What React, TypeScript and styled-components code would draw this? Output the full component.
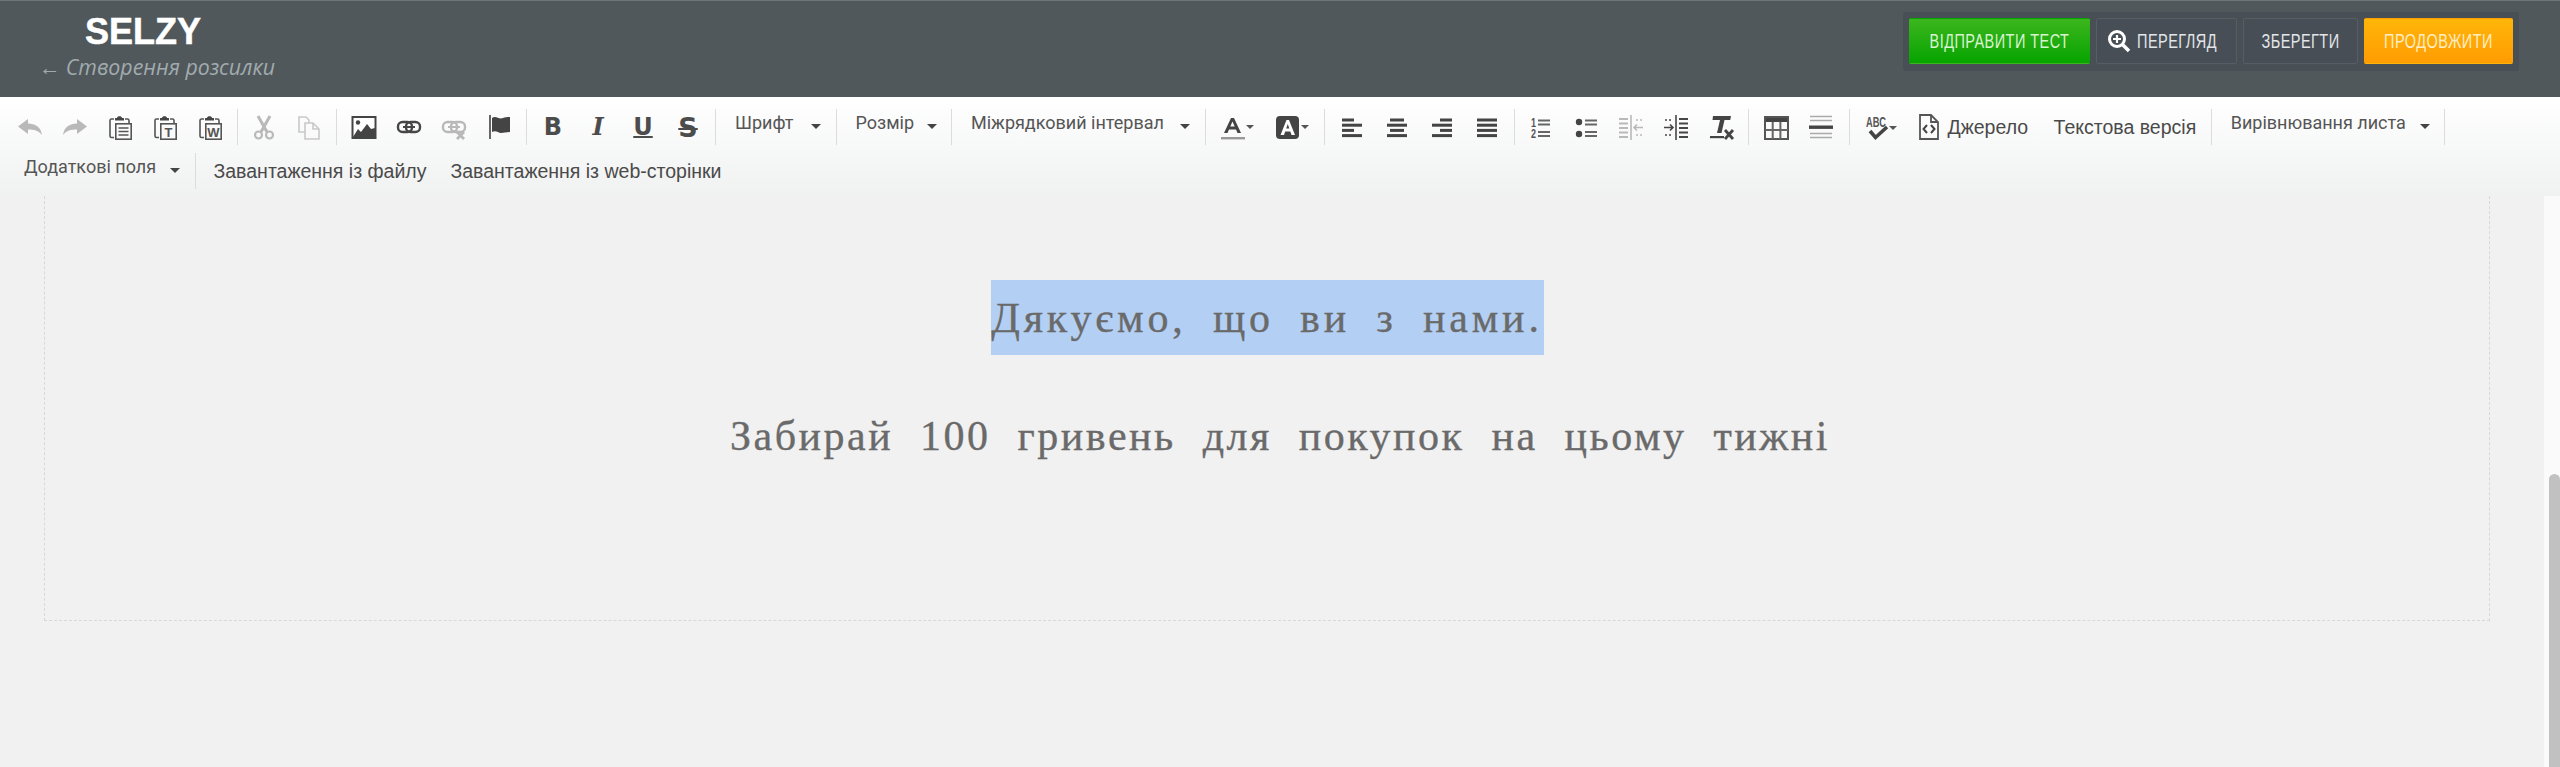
import React from 'react';
import styled, { createGlobalStyle } from 'styled-components';

const GlobalStyle = createGlobalStyle`
  html, body {
    margin: 0;
    padding: 0;
    height: 100%;
    background: #f1f1f1;
    overflow: hidden;
  }
`;

const Page = styled.div`
  width: 2560px;
  height: 767px;
  display: flex;
  flex-direction: column;
  overflow: hidden;
  font-family: 'Liberation Sans', Arial, sans-serif;
`;

const Header = styled.header`
  height: 97px;
  box-sizing: border-box;
  flex: none;
  display: flex;
  justify-content: space-between;
  align-items: flex-start;
  background: #50585c;
  border-top: 1px solid #6f7679;
  padding: 11px 41px 0 39px;
`;

const Brand = styled.div`
  display: flex;
  flex-direction: column;
`;

const Logo = styled.div`
  margin: 1px 0 0 46px;
  font-size: 36px;
  line-height: 38px;
  font-weight: 700;
  letter-spacing: 0;
  color: #fff;
  -webkit-text-stroke: 0.5px #fff;
`;

const Subtitle = styled.div`
  margin-top: 1px;
  font-family: 'Open Sans', sans-serif;
  font-style: italic;
  font-size: 21.3px;
  line-height: 30px;
  color: #a2abae;
`;

const ButtonGroup = styled.div`
  display: flex;
  gap: 6px;
  padding: 6px;
  height: 59px;
  box-sizing: border-box;
  background: #495055;
  border-radius: 3px;
`;

const tones = {
  green: { bg: 'linear-gradient(#3cb61e, #06a400)', fg: '#d9f2cf', line: 'transparent' },
  dark: { bg: '#474e56', fg: '#e3e6e8', line: '#565d64' },
  orange: { bg: 'linear-gradient(#ffb508, #ff9c03)', fg: '#ffedc4', line: 'transparent' },
};

const ActionButton = styled.div<{ $tone: keyof typeof tones; $width: number; $inset?: number }>`
  width: ${(p) => p.$width}px;
  height: 46px;
  box-sizing: border-box;
  display: flex;
  align-items: center;
  justify-content: center;
  gap: 6px;
  padding-right: ${(p) => p.$inset ?? 0}px;
  border-radius: 2px;
  border: 1px solid ${(p) => tones[p.$tone].line};
  background: ${(p) => tones[p.$tone].bg};
  color: ${(p) => tones[p.$tone].fg};
`;

// no narrow face is installed, so the caption is drawn small and pulled up
const ActionLabel = styled.span`
  display: inline-block;
  font-size: 14.5px;
  letter-spacing: 0.45px;
  white-space: nowrap;
  transform: scaleY(1.4);
`;

const Toolbar = styled.div`
  height: 99px;
  box-sizing: border-box;
  flex: none;
  background: linear-gradient(#ffffff, #f0f1f1);
  padding: 8px 0 0 7px;
  display: flex;
  flex-direction: column;
`;

const ToolRow = styled.div`
  height: 44px;
  display: flex;
  align-items: center;
  color: #444;
`;

const IconButton = styled.div<{ $off?: boolean; $w?: number }>`
  width: ${(p) => p.$w ?? 45}px;
  height: 44px;
  flex: none;
  display: flex;
  align-items: center;
  justify-content: center;
  color: ${(p) => (p.$off ? '#b9b9b9' : '#464646')};
`;

const Sep = styled.span`
  flex: none;
  width: 1px;
  height: 36px;
  margin: 0 4px 0 4.5px;
  background: #dcdcdc;
`;

const Dropdown = styled.div<{ $first?: boolean; $w: number }>`
  flex: none;
  width: ${(p) => p.$w}px;
  box-sizing: border-box;
  display: flex;
  align-items: center;
  justify-content: space-between;
  margin: -9px 0 0;
  padding: 0 10px 0 ${(p) => (p.$first ? 17 : 15)}px;
  font-family: Roboto, sans-serif;
  font-size: 18px;
  color: #555;
  white-space: nowrap;
`;

const Caret = styled.span`
  width: 0;
  height: 0;
  margin-top: 8px;
  border-left: 5px solid transparent;
  border-right: 5px solid transparent;
  border-top: 5px solid #444;
`;

const TextButton = styled.div<{ $gap?: number; $after?: number }>`
  flex: none;
  margin-left: ${(p) => p.$gap ?? 0}px;
  margin-right: ${(p) => p.$after ?? 0}px;
  font-size: 19.5px;
  color: #4a4a4a;
  white-space: nowrap;
`;

const GlyphText = styled.span<{ $italic?: boolean; $under?: boolean; $strike?: boolean }>`
  font-family: ${(p) => (p.$italic ? "'DejaVu Serif'" : "'DejaVu Sans'")}, sans-serif;
  font-weight: 700;
  font-size: ${(p) => (p.$strike ? 27 : 24)}px;
  line-height: 1;
  color: #4c4c4c;
  font-style: ${(p) => (p.$italic ? 'italic' : 'normal')};
  text-decoration: ${(p) => (p.$under ? 'underline' : p.$strike ? 'line-through' : 'none')};
  text-decoration-thickness: 2px;
`;

const Main = styled.div`
  flex: 1;
  display: flex;
  min-height: 0;
`;

const Canvas = styled.div`
  flex: 1;
  padding: 0 54px 0 44px;
`;

const LetterBox = styled.div`
  height: 425px;
  box-sizing: border-box;
  border: 1px dashed #d8d8d8;
  border-top: none;
  padding-top: 84px;
  display: flex;
  flex-direction: column;
  align-items: center;
  font-family: 'Liberation Serif', serif;
  color: #6a6a6a;
  -webkit-text-stroke: 0.35px #6a6a6a;
`;

const Selected = styled.div`
  height: 75px;
  width: 553px;
  display: flex;
  align-items: center;
  justify-content: center;
  background: #b3d0f4;
  font-size: 42px;
  letter-spacing: 3.8px;
  word-spacing: 12px;
  white-space: nowrap;
`;

const Offer = styled.div`
  margin-top: 44px;
  margin-left: 26px;
  font-size: 42px;
  line-height: 75px;
  letter-spacing: 2.5px;
  word-spacing: 14px;
  white-space: nowrap;
`;

const ScrollTrack = styled.div`
  width: 16px;
  flex: none;
  display: flex;
  flex-direction: column;
  background: #fafafa;
  padding-top: 278px;
  box-sizing: border-box;
`;

const ScrollThumb = styled.div`
  flex: 1;
  margin-left: 5px;
  border-radius: 6px 6px 0 0;
  background: #c1c1c1;
`;

const Svg: React.FC<{ children: React.ReactNode; w?: number }> = ({ children, w = 30 }) => (
  <svg width={w} height={30} viewBox={`0 0 ${w} 30`} fill="none">
    {children}
  </svg>
);

const Undo = ({ flip }: { flip?: boolean }) => (
  <Svg>
    <path
      d="M3 14.5 L13 7 V11.5 C20 11.5 26 15 27 23 C23.5 18.5 19 17.5 13 17.5 V22 Z"
      fill="currentColor"
      transform={flip ? 'matrix(-1 0 0 1 30 0)' : undefined}
    />
  </Svg>
);

const Paste = ({ letter }: { letter?: string }) => (
  <Svg>
    <path d="M9 7 H6.5 C5.5 7 5 7.6 5 8.5 V24 C5 25 5.5 25.5 6.5 25.5 H9" stroke="#555" strokeWidth="1.6" />
    <path d="M20 7 H22.5 C23.5 7 24 7.6 24 8.5 V11" stroke="#555" strokeWidth="1.6" />
    <path d="M10 8.5 V6.5 C10 6 10.5 6 11 6 H12 C12 3.5 17 3.5 17 6 H18 C18.5 6 19 6 19 6.5 V8.5 Z" fill="#444" />
    <rect x="10.8" y="11.8" width="15.4" height="15.4" fill="#fafafa" stroke="#555" strokeWidth="1.6" />
    {letter ? (
      <text x="18.5" y="24.5" textAnchor="middle" fontFamily="Liberation Sans" fontSize="13" fontWeight="700" fill="#555">
        {letter}
      </text>
    ) : (
      <path d="M13.5 16 H23.5 M13.5 19.5 H23.5 M13.5 23 H23.5" stroke="#555" strokeWidth="1.7" />
    )}
  </Svg>
);

const Cut = () => (
  <Svg>
    <path d="M9 4 L18 20 M21 4 L12 20" stroke="currentColor" strokeWidth="3" />
    <circle cx="9.5" cy="23" r="3.5" stroke="currentColor" strokeWidth="2.2" />
    <circle cx="20.5" cy="23" r="3.5" stroke="currentColor" strokeWidth="2.2" />
  </Svg>
);

const Copy = () => (
  <Svg>
    <path d="M11 20 H5 V5 H12 L15 8 V11" stroke="#c9c9c9" strokeWidth="1.6" />
    <path d="M11 11 H19 L25 17 V27 H11 Z M19 11 V17 H25" stroke="#c9c9c9" strokeWidth="1.6" />
  </Svg>
);

const ImageIcon = () => (
  <Svg>
    <rect x="3.5" y="5" width="23" height="21" fill="#fff" stroke="#444" strokeWidth="2" />
    <circle cx="9" cy="10.5" r="2.2" fill="#444" />
    <path d="M4 25 L9 17 L12 20 L18 12 L22 17 L26 16 V25 Z" fill="#444" />
  </Svg>
);

const LinkIcon = ({ off }: { off?: boolean }) => (
  <Svg>
    <rect x="4" y="10" width="14" height="10" rx="4.5" stroke="currentColor" strokeWidth="2.4" />
    <rect x="12" y="10" width="14" height="10" rx="4.5" stroke="currentColor" strokeWidth="2.4" />
    <path d="M9 15 H21" stroke="currentColor" strokeWidth="2" />
    {off && <path d="M18 20 L25 27 M25 20 L18 27" stroke="currentColor" strokeWidth="2.8" />}
  </Svg>
);

const Flag = () => (
  <Svg>
    <path d="M6 3 V27" stroke="#666" strokeWidth="2" />
    <path d="M8 6 C12 3 15 8 19 6 C21 5 23 5 26 5 V20 C22 20 20 21 17 21 C14 21 12 18 8 20 Z" fill="#444" />
  </Svg>
);

const TextColor = () => (
  <Svg w={36}>
    <path d="M5 21 L12 6 H15 L22 21 H18.5 L17 17.5 H10 L8.5 21 Z M11.3 14.5 H15.7 L13.5 9.5 Z" fill="#444" fillRule="evenodd" />
    <rect x="2" y="25" width="24" height="2.4" fill="#999" />
    <path d="M27 13 H35 L31 17 Z" fill="#555" />
  </Svg>
);

const BgColor = () => (
  <Svg w={36}>
    <rect x="2" y="4" width="23" height="23" rx="4" fill="#444" />
    <path d="M6.5 23 L12.5 8 H15 L21 23 H17.5 L16.3 19.5 H11.2 L10 23 Z M12.2 16.5 H15.3 L13.8 12 Z" fill="#fff" fillRule="evenodd" />
    <path d="M27 13 H35 L31 17 Z" fill="#555" />
  </Svg>
);

const aligns: Record<string, [number, number][]> = {
  left: [[5, 12], [5, 20], [5, 12], [5, 20]],
  center: [[8, 14], [5, 20], [8, 14], [5, 20]],
  right: [[13, 12], [5, 20], [13, 12], [5, 20]],
  full: [[5, 20], [5, 20], [5, 20], [5, 20]],
};

const Align = ({ kind }: { kind: string }) => (
  <Svg>
    {aligns[kind].map(([x, w], i) => (
      <rect key={i} x={x} y={6.5 + i * 5.2} width={w} height={3} fill="#444" />
    ))}
  </Svg>
);

const Numbered = () => (
  <Svg>
    <text x="5" y="15" fontFamily="Liberation Sans" fontSize="12" fontWeight="700" fill="#555" textLength="5" lengthAdjust="spacingAndGlyphs">1</text>
    <text x="5" y="26" fontFamily="Liberation Sans" fontSize="12" fontWeight="700" fill="#555" textLength="5" lengthAdjust="spacingAndGlyphs">2</text>
    <path d="M12 8.5 H24 M12 12.5 H24 M12 20 H24 M12 24 H24" stroke="#666" strokeWidth="1.8" />
  </Svg>
);

const Bulleted = () => (
  <Svg>
    <circle cx="8" cy="10" r="3.2" fill="#444" />
    <circle cx="8" cy="22" r="3.2" fill="#444" />
    <path d="M14 8.5 H26 M14 12.5 H26 M14 20 H26 M14 24 H26" stroke="#666" strokeWidth="1.8" />
  </Svg>
);

const Indent = ({ out }: { out?: boolean }) => (
  <Svg>
    <g transform={out ? 'matrix(-1 0 0 1 30 0)' : undefined} stroke="currentColor">
      <path d="M15 3 V28" strokeWidth="1.6" />
      <path d="M4 8 H12 M4 23 H12" strokeWidth="1.6" strokeDasharray="2 2" />
      <path d="M3 15.5 H12 M9 12.5 L12 15.5 L9 18.5" strokeWidth="1.6" />
      <path d="M18 7 H27 M18 11.5 H27 M18 16 H27 M18 20.5 H27 M18 25 H27" strokeWidth="1.8" />
    </g>
  </Svg>
);

const ClearFormat = () => (
  <Svg>
    <path d="M7 4 H25 L24.2 8 H18.5 L15.5 21 H11 L14 8 H6.5 Z" fill="#444" />
    <rect x="4" y="24" width="14" height="2.2" fill="#444" />
    <path d="M19 18 L27 27 M27 18 L19 27" stroke="#444" strokeWidth="2.8" />
  </Svg>
);

const TableIcon = () => (
  <Svg>
    <rect x="3" y="5" width="25" height="5" fill="#444" />
    <rect x="4" y="5" width="23" height="22" stroke="#555" strokeWidth="2" />
    <path d="M4 18 H27 M11.7 10 V27 M19.4 10 V27" stroke="#666" strokeWidth="2" />
  </Svg>
);

const HrIcon = () => (
  <Svg>
    <path d="M4 4.5 H26 M4 8.5 H26 M4 21.5 H26 M4 25.5 H26" stroke="#aaa" strokeWidth="1.6" />
    <rect x="3" y="13.5" width="24" height="3.4" fill="#444" />
  </Svg>
);

const Spell = () => (
  <Svg w={40}>
    <text x="3" y="15" fontFamily="Liberation Sans" fontSize="15" fontWeight="700" fill="#555" textLength="20" lengthAdjust="spacingAndGlyphs">ABC</text>
    <path d="M7 19 L12.5 25.5 L24 15" stroke="#444" strokeWidth="3.6" />
    <path d="M26 14 H34 L30 18 Z" fill="#555" />
  </Svg>
);

const SourceIcon = () => (
  <Svg>
    <path d="M7 3 H18 L25 10 V27 H7 Z M18 3 V10 H25" stroke="#555" strokeWidth="1.8" />
    <path d="M14 13 L10.5 17 L14 21 M18 13 L21.5 17 L18 21" stroke="#444" strokeWidth="2" />
  </Svg>
);

const ZoomIcon = () => (
  <svg width="24" height="24" viewBox="0 0 24 24" fill="none">
    <circle cx="10" cy="10" r="7.5" stroke="#fff" strokeWidth="3" />
    <path d="M15.5 15.5 L22 22" stroke="#fff" strokeWidth="3.6" />
    <path d="M6 10 H14 M10 6 V14" stroke="#fff" strokeWidth="2.2" />
  </svg>
);

export default function App() {
  return (
    <Page>
      <GlobalStyle />
      <Header>
        <Brand>
          <Logo>SELZY</Logo>
          <Subtitle>← Створення розсилки</Subtitle>
        </Brand>
        <ButtonGroup>
          <ActionButton $tone="green" $width={181}><ActionLabel>ВІДПРАВИТИ ТЕСТ</ActionLabel></ActionButton>
          <ActionButton $tone="dark" $width={141} $inset={9}>
            <ZoomIcon />
            <ActionLabel>ПЕРЕГЛЯД</ActionLabel>
          </ActionButton>
          <ActionButton $tone="dark" $width={115}><ActionLabel>ЗБЕРЕГТИ</ActionLabel></ActionButton>
          <ActionButton $tone="orange" $width={149}><ActionLabel>ПРОДОВЖИТИ</ActionLabel></ActionButton>
        </ButtonGroup>
      </Header>

      <Toolbar>
        <ToolRow>
          <IconButton $off><Undo /></IconButton>
          <IconButton $off><Undo flip /></IconButton>
          <IconButton><Paste /></IconButton>
          <IconButton><Paste letter="T" /></IconButton>
          <IconButton><Paste letter="W" /></IconButton>
          <Sep />
          <IconButton $off><Cut /></IconButton>
          <IconButton $off><Copy /></IconButton>
          <Sep />
          <IconButton><ImageIcon /></IconButton>
          <IconButton><LinkIcon /></IconButton>
          <IconButton $off><LinkIcon off /></IconButton>
          <IconButton><Flag /></IconButton>
          <Sep />
          <IconButton><GlyphText>B</GlyphText></IconButton>
          <IconButton><GlyphText $italic>I</GlyphText></IconButton>
          <IconButton><GlyphText $under>U</GlyphText></IconButton>
          <IconButton><GlyphText $strike>S</GlyphText></IconButton>
          <Sep />
          <Dropdown $w={111}>Шрифт<Caret /></Dropdown>
          <Sep />
          <Dropdown $w={106}>Розмір<Caret /></Dropdown>
          <Sep />
          <Dropdown $w={244}>Міжрядковий інтервал<Caret /></Dropdown>
          <Sep />
          <IconButton $w={55}><TextColor /></IconButton>
          <IconButton $w={55}><BgColor /></IconButton>
          <Sep />
          <IconButton><Align kind="left" /></IconButton>
          <IconButton><Align kind="center" /></IconButton>
          <IconButton><Align kind="right" /></IconButton>
          <IconButton><Align kind="full" /></IconButton>
          <Sep />
          <IconButton><Numbered /></IconButton>
          <IconButton><Bulleted /></IconButton>
          <IconButton $off><Indent out /></IconButton>
          <IconButton><Indent /></IconButton>
          <IconButton><ClearFormat /></IconButton>
          <Sep />
          <IconButton><TableIcon /></IconButton>
          <IconButton $w={46}><HrIcon /></IconButton>
          <Sep />
          <IconButton $w={59}><Spell /></IconButton>
          <IconButton $w={30}><SourceIcon /></IconButton>
          <TextButton $gap={5}>Джерело</TextButton>
          <TextButton $gap={25.5} $after={10}>Текстова версія</TextButton>
          <Sep />
          <Dropdown $w={224}>Вирівнювання листа<Caret /></Dropdown>
          <Sep />
        </ToolRow>
        <ToolRow>
          <Dropdown $first $w={183}>Додаткові поля<Caret /></Dropdown>
          <Sep />
          <TextButton $gap={14}>Завантаження із файлу</TextButton>
          <TextButton $gap={24}>Завантаження із web-сторінки</TextButton>
        </ToolRow>
      </Toolbar>

      <Main>
        <Canvas>
          <LetterBox>
            <Selected>Дякуємо, що ви з нами.</Selected>
            <Offer>Забирай 100 гривень для покупок на цьому тижні</Offer>
          </LetterBox>
        </Canvas>
        <ScrollTrack>
          <ScrollThumb />
        </ScrollTrack>
      </Main>
    </Page>
  );
}
